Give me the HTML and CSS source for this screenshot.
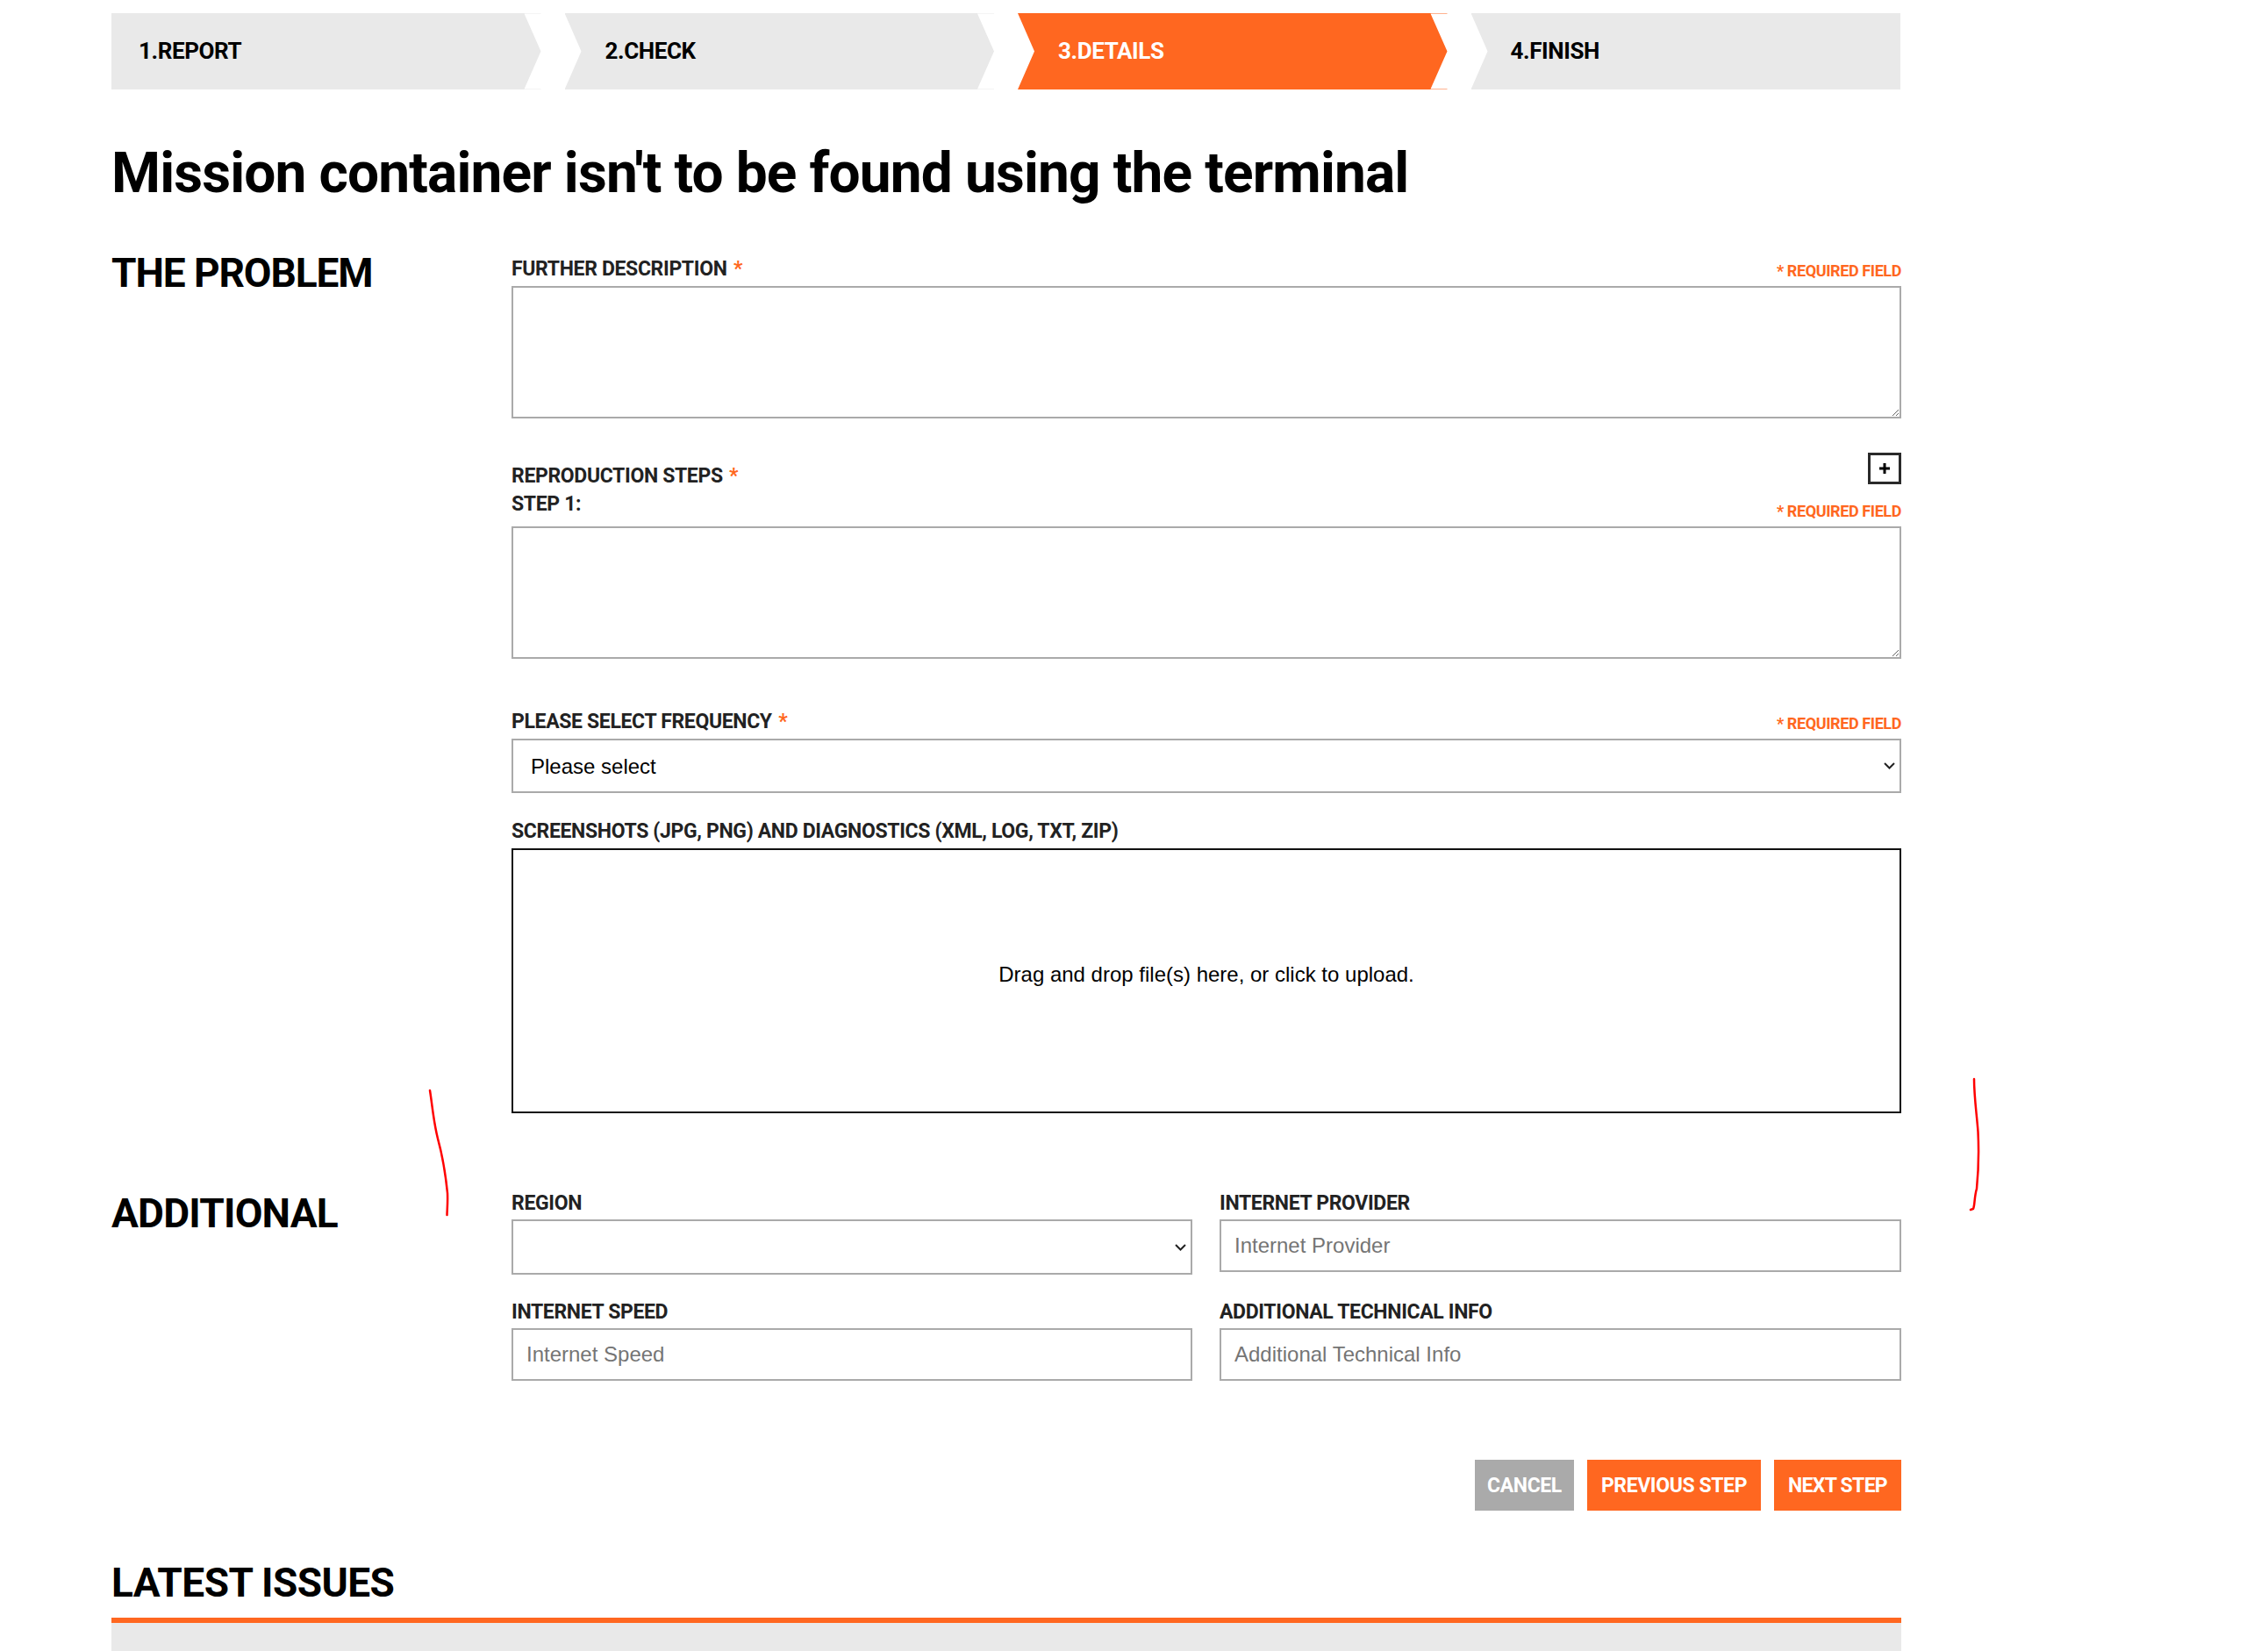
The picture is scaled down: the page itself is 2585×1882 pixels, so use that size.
FILE: index.html
```html
<!DOCTYPE html>
<html lang="en">
<head>
<meta charset="utf-8">
<title>Report issue - Details</title>
<link rel="stylesheet" href="styles.css">
</head>
<body>
<main class="page">
  <nav class="steps">
    <div class="step step-first"><span>1.REPORT</span></div>
    <div class="step step-mid"><span>2.CHECK</span></div>
    <div class="step step-mid step-active"><span>3.DETAILS</span></div>
    <div class="step step-last"><span>4.FINISH</span></div>
  </nav>
  <h1 class="title">Mission container isn't to be found using the terminal</h1>

  <section class="section section-problem">
    <h2 class="section-title">THE PROBLEM</h2>
    <div class="fields">
      <div class="field">
        <div class="label-row">
          <label class="label">FURTHER DESCRIPTION <i class="star">*</i></label>
          <span class="required">* REQUIRED FIELD</span>
        </div>
        <textarea class="textarea"></textarea>
      </div>
      <div class="field field-steps">
        <div class="label-row">
          <div class="label-stack">
            <label class="label">REPRODUCTION STEPS <i class="star">*</i></label>
            <label class="label">STEP 1:</label>
          </div>
          <div class="side-stack">
            <button class="plus" type="button" aria-label="Add step">
              <svg viewBox="0 0 12 12" width="12" height="12"><path d="M6 0v12M0 6h12" stroke="#000" stroke-width="3" fill="none"/></svg>
            </button>
            <span class="required">* REQUIRED FIELD</span>
          </div>
        </div>
        <textarea class="textarea"></textarea>
      </div>
      <div class="field field-frequency">
        <div class="label-row">
          <label class="label">PLEASE SELECT FREQUENCY <i class="star">*</i></label>
          <span class="required">* REQUIRED FIELD</span>
        </div>
        <div class="select-wrap">
          <select class="select"><option>Please select</option></select>
          <svg class="chevron" viewBox="0 0 13 8" width="13" height="8"><path d="M1 1l5.500 5.500L12 1" stroke="#222" stroke-width="2" fill="none"/></svg>
        </div>
      </div>
      <div class="field field-upload">
        <div class="label-row">
          <label class="label">SCREENSHOTS (JPG, PNG) AND DIAGNOSTICS (XML, LOG, TXT, ZIP)</label>
        </div>
        <div class="dropzone">Drag and drop file(s) here, or click to upload.</div>
      </div>
    </div>
  </section>

  <section class="section section-additional">
    <h2 class="section-title">ADDITIONAL</h2>
    <div class="grid">
      <div class="cell">
        <label class="label cell-label">REGION</label>
        <div class="select-wrap">
          <select class="select select-region"><option></option></select>
          <svg class="chevron" viewBox="0 0 13 8" width="13" height="8"><path d="M1 1l5.500 5.500L12 1" stroke="#222" stroke-width="2" fill="none"/></svg>
        </div>
      </div>
      <div class="cell">
        <label class="label cell-label">INTERNET PROVIDER</label>
        <input class="input" type="text" placeholder="Internet Provider">
      </div>
      <div class="cell">
        <label class="label cell-label">INTERNET SPEED</label>
        <input class="input" type="text" placeholder="Internet Speed">
      </div>
      <div class="cell">
        <label class="label cell-label">ADDITIONAL TECHNICAL INFO</label>
        <input class="input" type="text" placeholder="Additional Technical Info">
      </div>
    </div>
  </section>

  <div class="actions">
    <button class="btn btn-grey" type="button">CANCEL</button>
    <button class="btn btn-prev" type="button">PREVIOUS STEP</button>
    <button class="btn btn-next" type="button">NEXT STEP</button>
  </div>

  <h2 class="section-title latest">LATEST ISSUES</h2>
  <div class="latest-body"></div>
</main>
<svg class="marks" width="2585" height="1882" viewBox="0 0 2585 1882" aria-hidden="true">
  <path d="M490 1243C493 1262 494 1278 499 1298C505 1320 508 1340 510 1360C510.500 1372 509.500 1380 509.500 1385" stroke="#f00" stroke-width="2.500" fill="none" stroke-linecap="round"/>
  <path d="M2250 1230C2250 1250 2253 1270 2254.500 1290C2255.500 1310 2255 1335 2253 1355C2250 1365 2251 1374 2249 1378L2246 1379" stroke="#f00" stroke-width="2.500" fill="none" stroke-linecap="round"/>
</svg>
</body>
</html>
```
FILE: styles.css
```css
html, body {
  margin: 0;
  padding: 0;
  background: #fff;
}
body {
  position: relative;
  height: 1882px;
  overflow: hidden;
  font-family: "Roboto", "Liberation Sans", sans-serif;
  color: #000;
}
.page {
  width: 2040px;
  margin-left: 127px;
  padding-top: 15px;
}
.steps {
  display: flex;
  gap: 27px;
  height: 87px;
}
.step {
  box-sizing: border-box;
  flex: 0 0 489.500px;
  display: flex;
  align-items: center;
  padding-bottom: 2px;
  background: #e9e9e9;
  font-size: 26px;
  font-weight: 700;
  letter-spacing: -0.4px;
  color: #000;
}
.step-first {
  padding-left: 31px;
  clip-path: polygon(0 0, 100% 0, 100% 0.5px, calc(100% - 19px) 0.5px, 100% 50%, calc(100% - 19px) calc(100% - 0.5px), 100% calc(100% - 0.5px), 100% 100%, 0 100%);
}
.step-mid {
  padding-left: 46px;
  clip-path: polygon(0 0, 100% 0, 100% 0.5px, calc(100% - 19px) 0.5px, 100% 50%, calc(100% - 19px) calc(100% - 0.5px), 100% calc(100% - 0.5px), 100% 100%, 0 100%, 19px 50%);
}
.step-last {
  padding-left: 45px;
  clip-path: polygon(0 0, 100% 0, 100% 100%, 0 100%, 19px 50%);
}
.step-active {
  background: #ff6720;
  color: #fff;
}
.title {
  margin: 56px 0 0;
  font-size: 64px;
  line-height: 80px;
  font-weight: 700;
  letter-spacing: -0.87px;
}
.section {
  display: grid;
  grid-template-columns: 456px 1584px;
}
.section-problem {
  margin-top: 44px;
}
.section-additional {
  margin-top: 86px;
}
.section-title {
  margin: 0;
  font-size: 46px;
  line-height: 58px;
  font-weight: 700;
  letter-spacing: -0.8px;
}
.section-additional .section-title {
  line-height: 56px;
}
.section-problem .section-title {
  letter-spacing: -1.1px;
}
.fields {
  display: flex;
  flex-direction: column;
  padding-top: 8px;
}
.label-row {
  display: flex;
  justify-content: space-between;
  align-items: flex-end;
  margin-bottom: 5px;
}
.label {
  display: block;
  padding-top: 2px;
  font-size: 23px;
  line-height: 29px;
  font-weight: 700;
  color: #222;
  letter-spacing: -0.35px;
}
.cell-label {
  margin-bottom: 4px;
}
.star {
  margin-left: 2px;
  font-style: normal;
  color: #ff6720;
}
.required {
  font-size: 18px;
  line-height: 24px;
  font-weight: 700;
  color: #ff6720;
  letter-spacing: -0.4px;
}
.textarea {
  display: block;
  box-sizing: border-box;
  width: 100%;
  height: 151px;
  margin: 0;
  border: 2px solid #aaa;
  background: #fff;
  resize: vertical;
}
.field-steps {
  margin-top: 39px;
}
.label-stack {
  display: flex;
  flex-direction: column;
  gap: 1px;
  padding-bottom: 6px;
}
.side-stack {
  display: flex;
  flex-direction: column;
  align-items: flex-end;
  gap: 19px;
}
.plus {
  display: flex;
  align-items: center;
  justify-content: center;
  box-sizing: border-box;
  width: 38px;
  height: 36px;
  padding: 0;
  background: #fff;
  border: 3px solid #2a2a2a;
}
.field-frequency {
  margin-top: 55px;
}
.select-wrap {
  position: relative;
}
.select {
  display: block;
  box-sizing: border-box;
  width: 100%;
  height: 62px;
  margin: 0;
  padding: 0 20px;
  border: 2px solid #aaa;
  border-radius: 0;
  background: #fff;
  appearance: none;
  font-family: "Liberation Sans", sans-serif;
  font-size: 24px;
  color: #000;
}
.chevron {
  position: absolute;
  right: 7px;
  top: 50%;
  margin-top: -4px;
  pointer-events: none;
}
.field-upload {
  margin-top: 27px;
}
.dropzone {
  display: flex;
  align-items: center;
  justify-content: center;
  box-sizing: border-box;
  height: 302px;
  padding-bottom: 15px;
  border: 2px solid #111;
  font-family: "Liberation Sans", sans-serif;
  font-size: 24px;
  color: #000;
}
.grid {
  display: grid;
  grid-template-columns: 776px 777px;
  column-gap: 31px;
  row-gap: 26px;
}
.input {
  display: block;
  box-sizing: border-box;
  width: 100%;
  height: 60px;
  margin: 0;
  padding: 0 15px;
  border: 2px solid #aaa;
  border-radius: 0;
  background: #fff;
  font-family: "Liberation Sans", sans-serif;
  font-size: 24px;
  color: #000;
}
.input::placeholder {
  color: #757575;
  opacity: 1;
}
.select-region {
  height: 63px;
}
.actions {
  display: flex;
  justify-content: flex-end;
  gap: 15px;
  margin-top: 90px;
}
.btn {
  width: 198px;
  height: 58px;
  padding: 0;
  border: 0;
  background: #ff6720;
  color: #fff;
  font-family: "Roboto", "Liberation Sans", sans-serif;
  font-size: 23px;
  font-weight: 700;
  letter-spacing: -0.4px;
}
.btn-grey {
  width: 113px;
  background: #aaa;
}
.btn-next {
  width: 145px;
  letter-spacing: -0.7px;
}
.latest {
  margin-top: 49px;
  line-height: 66px;
  letter-spacing: -0.55px;
}
.latest-body {
  height: 32px;
  margin-top: 7px;
  border-top: 6px solid #ff6720;
  background: #e9e9e9;
}
.marks {
  position: absolute;
  left: 0;
  top: 0;
  pointer-events: none;
}
```
